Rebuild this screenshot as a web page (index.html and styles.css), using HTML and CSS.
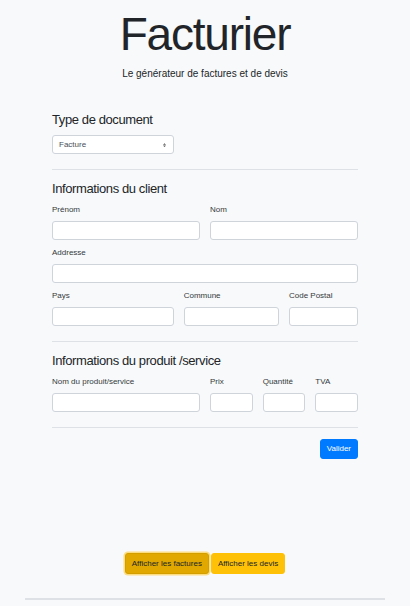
FILE: index.html
```html
<!DOCTYPE html>
<html lang="fr">

<head>
    <meta charset="UTF-8">
    <meta name="viewport" content="width=device-width">
    <title>Facturier</title>
    <link rel="stylesheet" href="styles.css">
</head>

<body>
    <header class="header">
        <h1>Facturier</h1>
        <p class="lead">Le générateur de factures et de devis</p>
    </header>

    <form class="container">
        <section class="block">
            <h2>Type de document</h2>
            <div class="row">
                <div class="col-5">
                    <select class="select">
                        <option>Facture</option>
                        <option>Devis</option>
                    </select>
                </div>
            </div>
        </section>

        <hr>

        <section class="block">
            <h2>Informations du client</h2>
            <div class="row">
                <label class="col-6">Prénom <input type="text"></label>
                <label class="col-6">Nom <input type="text"></label>
            </div>
            <div class="row">
                <label class="col-12">Addresse <input type="text"></label>
            </div>
            <div class="row">
                <label class="col-5">Pays <input type="text"></label>
                <label class="col-4">Commune <input type="text"></label>
                <label class="col-3">Code Postal <input type="text"></label>
            </div>
        </section>

        <hr>

        <section class="block">
            <h2>Informations du produit /service</h2>
            <div class="row">
                <label class="col-6">Nom du produit/service <input type="text"></label>
                <label class="col-2">Prix <input type="text"></label>
                <label class="col-2">Quantité <input type="text"></label>
                <label class="col-2">TVA <input type="text"></label>
            </div>
        </section>

        <hr>

        <div class="actions">
            <button type="submit" class="btn btn-primary">Valider</button>
        </div>
    </form>

    <footer class="footer">
        <div class="switch">
            <button type="button" class="btn btn-warning active">Afficher les factures</button>
            <button type="button" class="btn btn-warning">Afficher les devis</button>
        </div>
        <div class="bar"></div>
    </footer>
</body>

</html>
```

FILE: styles.css
```css
body {
    font-family: 'Liberation Sans', Arial, sans-serif;
    background-color: #f8f9fa;
    color: #212529;
    margin: 0;
    height: 606px;
    display: flex;
    flex-direction: column;
}

.header {
    text-align: center;
}

h1 {
    font-size: 46px;
    font-weight: 400;
    line-height: 56px;
    letter-spacing: -1.2px;
    margin: 6px 0 0;
}

.lead {
    font-size: 10px;
    line-height: 15px;
    margin: 4px 0 0;
}

.container {
    padding: 0 52px;
    margin-top: 31px;
}

h2 {
    font-size: 13px;
    font-weight: 400;
    line-height: 16px;
    letter-spacing: -0.4px;
    margin: 0;
}

.block {
    display: flex;
    flex-direction: column;
    gap: 7px;
}

.row {
    display: flex;
    margin: 0 -5px;
}

.col-2,
.col-3,
.col-4,
.col-5,
.col-6,
.col-12 {
    box-sizing: border-box;
    padding: 0 5px;
}

.col-2 { width: 16.6667%; }
.col-3 { width: 25%; }
.col-4 { width: 33.3333%; }
.col-5 { width: 41.6667%; }
.col-6 { width: 50%; }
.col-12 { width: 100%; }

label {
    display: flex;
    flex-direction: column;
    gap: 5px;
    font-size: 8px;
    line-height: 12px;
    color: #343a40;
}

input,
.select {
    display: block;
    box-sizing: border-box;
    width: 100%;
    height: 19px;
    margin: 0;
    background-color: #fff;
    border: 1px solid #ced4da;
    border-radius: 3px;
}

.select {
    appearance: none;
    -webkit-appearance: none;
    font-family: inherit;
    font-size: 8px;
    color: #495057;
    padding: 0 6px;
    background-image: url("data:image/svg+xml,%3Csvg xmlns='http://www.w3.org/2000/svg' width='4' height='5' viewBox='0 0 4 5'%3E%3Cpath fill='%23555' d='M2 0L0 2h4zM2 5L0 3h4z'/%3E%3C/svg%3E");
    background-repeat: no-repeat;
    background-position: right 7px center;
    background-size: 3px 4px;
}

hr {
    border: 0;
    height: 1px;
    background-color: #dee2e6;
    margin: 15px 0 11px;
}

.actions {
    display: flex;
    justify-content: flex-end;
}

.btn {
    font-family: inherit;
    font-size: 8px;
    line-height: 12px;
    border: 1px solid transparent;
    border-radius: 3px;
    cursor: pointer;
}

.btn-primary {
    background-color: #007bff;
    border-color: #007bff;
    color: #fff;
    height: 20px;
    padding: 0 6px;
}

.footer {
    margin-top: auto;
    padding-bottom: 6px;
}

.switch {
    display: flex;
    justify-content: center;
    gap: 2px;
}

.btn-warning {
    background-color: #ffc107;
    border-color: #ffc107;
    color: #212529;
    height: 21px;
    padding: 0 6px;
}

.btn-warning.active {
    background-color: #e0a800;
    border-color: #d39e00;
    box-shadow: 0 0 0 1.5px rgba(255, 193, 7, 0.5);
}

.bar {
    width: 360px;
    height: 2px;
    margin: 24px auto 0;
    background-color: #dee2e6;
}
```
